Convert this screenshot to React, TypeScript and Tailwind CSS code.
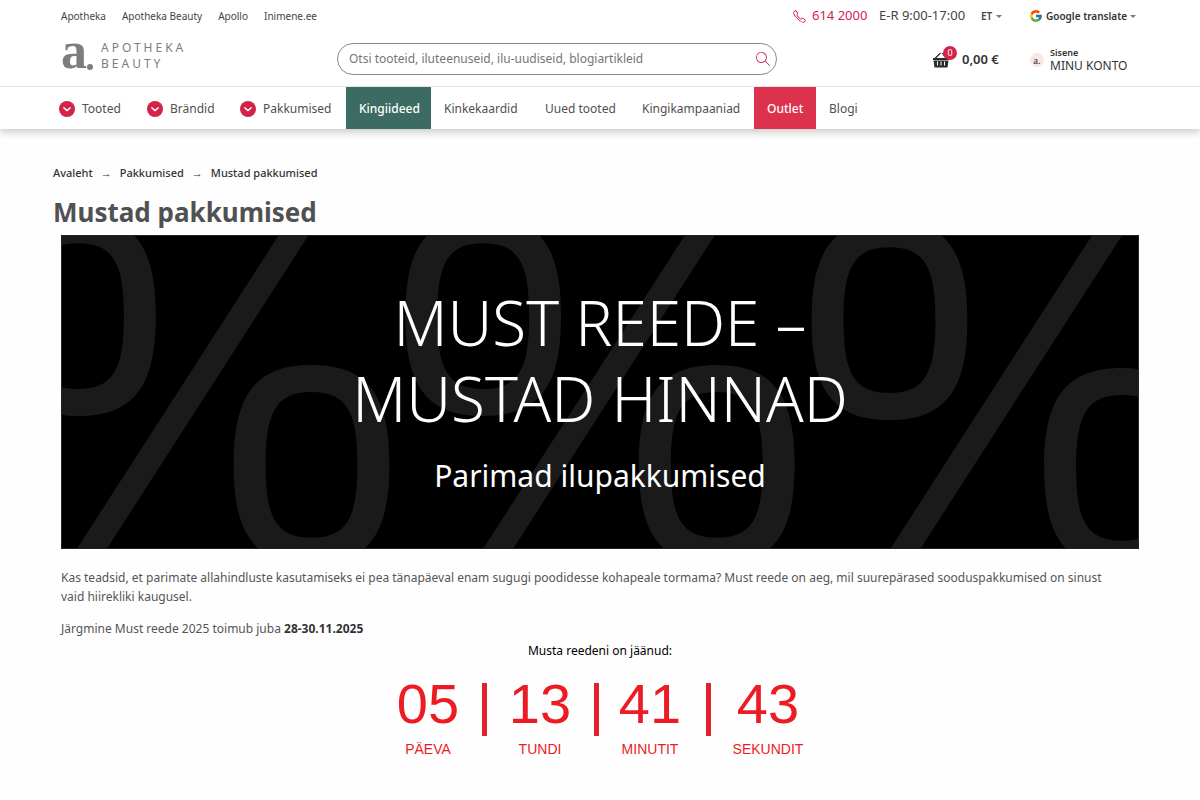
import React from "react";
import { FcGoogle } from "react-icons/fc";
import { SlMagnifier, SlPhone } from "react-icons/sl";

const topLinks = ["Apotheka", "Apotheka Beauty", "Apollo", "Inimene.ee"];

type NavItem = { label: string; menu?: boolean; tone?: string };

const navItems: NavItem[] = [
  { label: "Tooted", menu: true },
  { label: "Brändid", menu: true },
  { label: "Pakkumised", menu: true },
  { label: "Kingiideed", tone: "bg-[#3b6b62] font-medium text-white" },
  { label: "Kinkekaardid" },
  { label: "Uued tooted" },
  { label: "Kingikampaaniad" },
  { label: "Outlet", tone: "bg-[#dc324e] font-medium text-white" },
  { label: "Blogi" },
];

const countdown = [
  { value: "05", unit: "PÄEVA", cell: "w-[107px]" },
  { value: "13", unit: "TUNDI", cell: "w-[107px]" },
  { value: "41", unit: "MINUTIT", cell: "w-[107px] pr-1" },
  { value: "43", unit: "SEKUNDIT", cell: "w-[115px]" },
];

const rings = [
  [16, 81],
  [250, 230],
  [422, 81],
  [656, 230],
  [829, 85],
  [1062, 233],
];

const slashes = [15, 422, 830];

const ringPath =
  "M-78 0C-78-68-58-100 0-100S78-68 78 0S58 100 0 100S-78 68-78 0Z" +
  "M-46 0C-46-52-36-73 0-73S46-52 46 0S36 73 0 73S-46 52-46 0Z";

function Caret() {
  return (
    <svg viewBox="0 0 8 4" className="h-[3px] w-[6px] fill-[#777]" aria-hidden="true">
      <path d="M0 0h8L4 4z" />
    </svg>
  );
}

function ChevronBadge() {
  return (
    <svg viewBox="0 0 16 16" className="size-4 shrink-0" aria-hidden="true">
      <circle cx="8" cy="8" r="8" fill="#d32349" />
      <path
        d="M4.8 6.8 8 9.6l3.2-2.8"
        fill="none"
        stroke="#fff"
        strokeWidth="1.4"
        strokeLinecap="round"
        strokeLinejoin="round"
      />
    </svg>
  );
}

function Basket() {
  return (
    <svg viewBox="0 0 18 16" className="h-4 w-[18px]" aria-hidden="true">
      <path d="M3 6.5 8.500 1M14.500 6.500 10 1" stroke="#2b2b2b" strokeWidth="1.1" fill="none" />
      <path d="M1 6h16v2H1zM1.500 8.500h15L15.500 15.500h-13z" fill="#2b2b2b" />
      <path d="M5.500 9.500v4M9 9.500v4M12.500 9.500v4" stroke="#fff" strokeWidth="1" />
    </svg>
  );
}

function Header() {
  return (
    <header className="bg-white shadow-[0_3px_8px_rgba(0,0,0,0.22)]">
      <div className="flex h-8 items-center justify-between pr-[62px] pl-[61px]">
        <nav aria-label="Lehed" className="flex gap-4 text-[10px] text-[#444]">
          {topLinks.map((label) => (
            <a key={label} href="#">
              {label}
            </a>
          ))}
        </nav>
        <div className="flex items-center text-[13px] text-[#444]">
          <a href="tel:6142000" className="flex w-[86px] items-center gap-1.5 text-[#cf2350]">
            <SlPhone className="size-[13px]" />
            614 2000
          </a>
          <span className="w-[102px]">E-R 9:00-17:00</span>
          <button className="flex w-[48px] items-center gap-1 text-[10px] font-semibold">
            ET <Caret />
          </button>
          <button className="flex w-[109px] items-center gap-[3px] text-[10px] font-semibold whitespace-nowrap text-[#333]">
            <FcGoogle className="size-[14px]" />
            Google translate <Caret />
          </button>
        </div>
      </div>

      <div className="grid h-[55px] grid-cols-[276px_440px_1fr] items-center border-b border-[#e6e6e6] pr-[62px] pl-[61px]">
        <a href="#" aria-label="Apotheka Beauty" className="flex items-center gap-2 pb-1.5 text-[#7d7d7d]">
          <span className="flex h-7 items-end">
            <span className="font-['Liberation_Serif',serif] text-[52px] leading-[38px] font-bold">a</span>
            <span className="size-1.5 rounded-full bg-[#7d7d7d]" />
          </span>
          <span className="text-[12px] leading-4 tracking-[3px]">
            APOTHEKA
            <br />
            BEAUTY
          </span>
        </a>
        <form className="flex h-8 items-center rounded-full border border-[#8a8a8a] pr-1.5 pl-[11px]">
          <input
            type="search"
            aria-label="Otsi"
            placeholder="Otsi tooteid, iluteenuseid, ilu-uudiseid, blogiartikleid"
            className="min-w-0 flex-1 bg-transparent text-[12px] outline-none placeholder:text-[#757575]"
          />
          <button type="submit" aria-label="Otsi">
            <SlMagnifier className="size-[14px] text-[#cf2350]" />
          </button>
        </form>
        <div className="flex items-center justify-end pt-0.5">
          <a href="#" className="flex w-[98px] items-center text-[13px] font-semibold text-[#333]">
            <span className="relative mr-3">
              <Basket />
              <span className="absolute -top-1.5 left-[11px] flex size-[14px] items-center justify-center rounded-full bg-[#d32349] text-[9px] font-normal text-white">
                0
              </span>
            </span>
            0,00 €
          </a>
          <a href="#" className="flex w-[108px] items-center gap-1.5 text-[#333]">
            <span className="flex size-[14px] items-center justify-center rounded-full bg-[#fae6e6] font-['Liberation_Serif',serif] text-[11px] leading-3">
              a.
            </span>
            <span className="flex flex-col">
              <span className="text-[9px] leading-3 font-semibold">Sisene</span>
              <span className="text-[12px] leading-[14px]">MINU KONTO</span>
            </span>
          </a>
        </div>
      </div>

      <nav
        aria-label="Peamenüü"
        className="grid h-[42px] grid-cols-[88px_93px_119px_85px_101px_97px_125px_62px_54px] pl-[46px] text-[12px] text-[#505050]"
      >
        {navItems.map((item) => (
          <a
            key={item.label}
            href="#"
            className={`flex items-center gap-[7px] pt-0.5 pl-[13px] whitespace-nowrap ${item.tone ?? ""}`}
          >
            {item.menu && <ChevronBadge />}
            {item.label}
          </a>
        ))}
      </nav>
    </header>
  );
}

function Banner() {
  return (
    <section className="relative flex h-[314px] flex-col items-center justify-center overflow-hidden border border-[#222] bg-black pb-1 text-white">
      <svg
        viewBox="0 0 1078 314"
        preserveAspectRatio="xMidYMid slice"
        className="absolute inset-0 size-full fill-[#1a1a1a]"
        aria-hidden="true"
      >
        {slashes.map((x) => (
          <path key={x} d={`M${x} 314h30L${x + 232} 0h-30z`} />
        ))}
        {rings.map(([x, y]) => (
          <path key={x} d={ringPath} fillRule="evenodd" transform={`translate(${x} ${y})`} />
        ))}
      </svg>
      <h2 className="relative text-center text-[62px] leading-[76px] font-light">
        MUST REEDE –
        <br />
        MUSTAD HINNAD
      </h2>
      <p className="relative mt-5 text-[30px] leading-10">Parimad ilupakkumised</p>
    </section>
  );
}

function Countdown() {
  return (
    <div className="mt-3 flex justify-center font-['Liberation_Sans',Arial,sans-serif] text-[#ed1c24]">
      {countdown.map((part, index) => (
        <React.Fragment key={part.unit}>
          {index > 0 && <span className="mt-[11px] h-[53px] w-[5px] bg-[#e0202a]" />}
          <div className={`flex flex-col items-center ${part.cell}`}>
            <span className="text-[56px] leading-[64px]">{part.value}</span>
            <span className="mt-[5px] text-[14px] leading-4">{part.unit}</span>
          </div>
        </React.Fragment>
      ))}
    </div>
  );
}

export default function App() {
  return (
    <div className="min-h-screen bg-[#fefefe] font-['Noto_Sans',sans-serif] text-[#555]">
      <Header />
      <main className="px-[53px] pt-9">
        <nav aria-label="Asukoht" className="flex gap-2 text-[11px] leading-4 font-medium text-[#333]">
          <a href="#">Avaleht</a>
          <span className="font-normal">→</span>
          <a href="#">Pakkumised</a>
          <span className="font-normal">→</span>
          <span>Mustad pakkumised</span>
        </nav>
        <h1 className="mt-3 text-[26px] leading-[38px] font-bold text-[#505153]">Mustad pakkumised</h1>
        <div className="mt-1 px-2">
          <Banner />
          <p className="mt-[19px] pr-4 text-[12px] leading-[19px]">
            Kas teadsid, et parimate allahindluste kasutamiseks ei pea tänapäeval enam sugugi poodidesse kohapeale
            tormama? Must reede on aeg, mil suurepärased sooduspakkumised on sinust vaid hiirekliki kaugusel.
          </p>
          <p className="mt-[13px] text-[12px] leading-[19px]">
            Järgmine Must reede 2025 toimub juba <strong className="text-[#333]">28-30.11.2025</strong>
          </p>
          <p className="mt-1 text-center text-[12px] leading-[18px] text-black">Musta reedeni on jäänud:</p>
          <Countdown />
        </div>
      </main>
    </div>
  );
}
